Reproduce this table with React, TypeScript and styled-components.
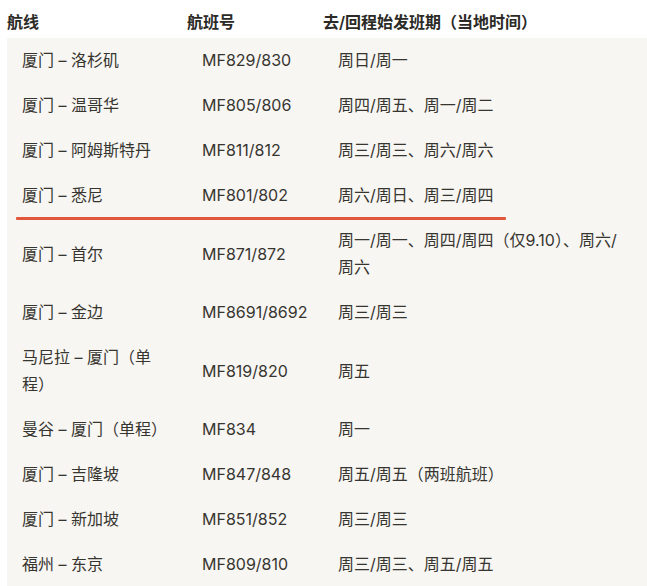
import React from 'react';
import styled, { createGlobalStyle } from 'styled-components';

const GlobalStyle = createGlobalStyle`
  html, body {
    margin: 0;
    padding: 0;
    background: #ffffff;
  }
  body {
    font-family: "Inter", "Noto Sans CJK SC", sans-serif;
    color: #37352f;
    -webkit-font-smoothing: antialiased;
  }
`;

const Page = styled.div`
  padding-left: 7px;
  width: 640px;
  overflow: hidden;
`;

const Columns = styled.div`
  display: grid;
  grid-template-columns: 180px 136px 1fr;
  align-items: center;
`;

const HeaderRow = styled(Columns)`
  padding: 8px 0 2px;
`;

const HeaderCell = styled.div`
  font-size: 16px;
  line-height: 28px;
  font-weight: 600;
  color: #2b2a26;
  white-space: nowrap;
`;

const Body = styled.div`
  background: #f7f6f3;
`;

const Row = styled(Columns)<{ $marked?: boolean }>`
  position: relative;

  ${({ $marked }) =>
    $marked &&
    `
    &::after {
      content: '';
      position: absolute;
      left: 9px;
      width: 490px;
      bottom: -2px;
      height: 3px;
      border-radius: 1px;
      background: #e2563c;
    }
  `}
`;

const Cell = styled.div<{ $last?: boolean }>`
  font-size: 16px;
  line-height: 27px;
  padding: 9px ${({ $last }) => ($last ? '22px' : '15px')} 9px 15px;
  color: #37352f;
`;

const flights = [
  { route: '厦门 – 洛杉矶', no: 'MF829/830', days: '周日/周一' },
  { route: '厦门 – 温哥华', no: 'MF805/806', days: '周四/周五、周一/周二' },
  { route: '厦门 – 阿姆斯特丹', no: 'MF811/812', days: '周三/周三、周六/周六' },
  { route: '厦门 – 悉尼', no: 'MF801/802', days: '周六/周日、周三/周四', marked: true },
  { route: '厦门 – 首尔', no: 'MF871/872', days: '周一/周一、周四/周四（仅9.10）、周六/周六' },
  { route: '厦门 – 金边', no: 'MF8691/8692', days: '周三/周三' },
  { route: '马尼拉 – 厦门（单程）', no: 'MF819/820', days: '周五' },
  { route: '曼谷 – 厦门（单程）', no: 'MF834', days: '周一' },
  { route: '厦门 – 吉隆坡', no: 'MF847/848', days: '周五/周五（两班航班）' },
  { route: '厦门 – 新加坡', no: 'MF851/852', days: '周三/周三' },
  { route: '福州 – 东京', no: 'MF809/810', days: '周三/周三、周五/周五' },
];

export default function App() {
  return (
    <>
      <GlobalStyle />
      <Page>
        <HeaderRow>
          <HeaderCell>航线</HeaderCell>
          <HeaderCell>航班号</HeaderCell>
          <HeaderCell>去/回程始发班期（当地时间）</HeaderCell>
        </HeaderRow>
        <Body>
          {flights.map((f, i) => (
            <Row key={i} $marked={f.marked}>
              <Cell>{f.route}</Cell>
              <Cell>{f.no}</Cell>
              <Cell $last>{f.days}</Cell>
            </Row>
          ))}
        </Body>
      </Page>
    </>
  );
}
